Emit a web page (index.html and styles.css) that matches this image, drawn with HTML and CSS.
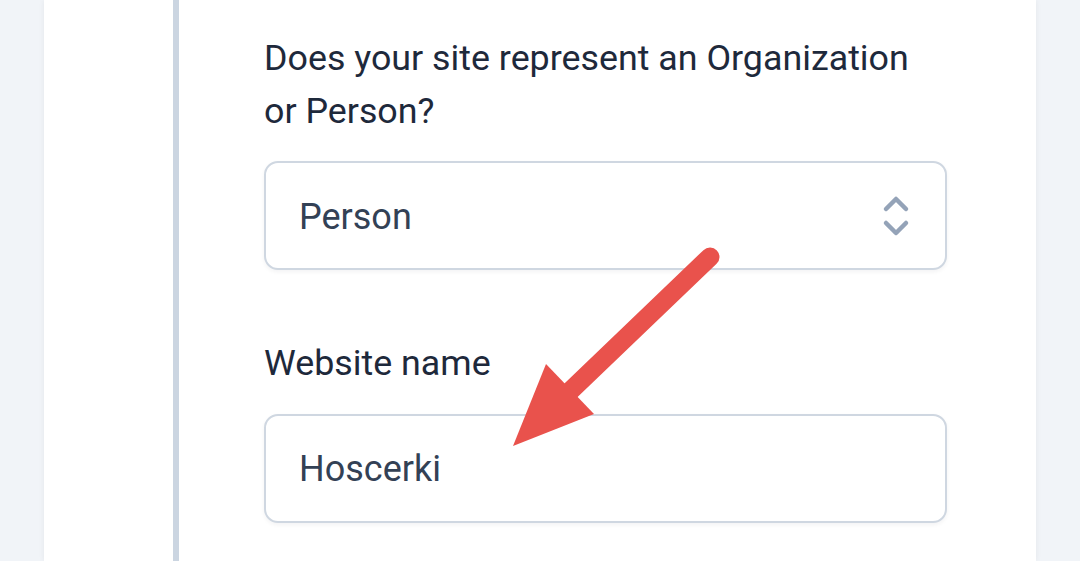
FILE: index.html
```html
<!DOCTYPE html>
<html lang="en">
<head>
<meta charset="utf-8">
<title>Site settings</title>
<link rel="stylesheet" href="styles.css">
</head>
<body>
<div class="page">
  <div class="card">
    <div class="section">
      <div class="field">
        <label class="label" for="kind">Does your site represent an Organization or Person?</label>
        <div class="control select">
          <span class="value">Person</span>
          <svg class="chev" width="30" height="46" viewBox="0 0 30 46" aria-hidden="true">
            <path d="M5 16 L15 6 L25 16" fill="none" stroke="#94a3b8" stroke-width="4.5" stroke-linecap="round" stroke-linejoin="round"/>
            <path d="M5 30 L15 40 L25 30" fill="none" stroke="#94a3b8" stroke-width="4.5" stroke-linecap="round" stroke-linejoin="round"/>
          </svg>
        </div>
      </div>
      <div class="field">
        <label class="label" for="name">Website name</label>
        <div class="control input"><span class="value">Hoscerki</span></div>
      </div>
    </div>
  </div>
  <svg class="arrow" width="1080" height="561" viewBox="0 0 1080 561" aria-hidden="true">
    <line x1="710" y1="257" x2="565" y2="396" stroke="#e9524c" stroke-width="19" stroke-linecap="round"/>
    <polygon points="513,446 546,364 594,414" fill="#e9524c"/>
  </svg>
</div>
</body>
</html>
```
FILE: styles.css
```css
html, body {
  margin: 0;
  padding: 0;
}
body {
  background: #f1f4f8;
  font-family: Roboto, "Liberation Sans", sans-serif;
  overflow: hidden;
}
.page {
  position: relative;
  width: 1080px;
  height: 561px;
  overflow: hidden;
}
.card {
  margin-left: 44px;
  width: 992px;
  height: 561px;
  background: #ffffff;
  box-shadow: 0 0 6px rgba(15, 23, 42, 0.06);
  padding-left: 129px;
  box-sizing: border-box;
}
.section {
  border-left: 6px solid #cbd5e1;
  height: 100%;
  box-sizing: border-box;
  padding: 32px 89px 0 85px;
  display: flex;
  flex-direction: column;
  gap: 67px;
}
.field {
  display: flex;
  flex-direction: column;
  gap: 24px;
}
.label {
  font-size: 35.8px;
  line-height: 52.5px;
  color: #1e293b;
  padding-right: 8px;
}
.control {
  height: 109px;
  flex: none;
  box-sizing: border-box;
  border: 2px solid #cfd7e1;
  border-radius: 14px;
  background: #fff;
  box-shadow: 0 2px 4px rgba(15, 23, 42, 0.05);
  display: flex;
  align-items: center;
  justify-content: space-between;
  padding: 2px 34px 0 33px;
}
.value {
  font-size: 36px;
  color: #334155;
}
.chev {
  display: block;
  margin-top: -2px;
}
.arrow {
  position: absolute;
  left: 0;
  top: 0;
  pointer-events: none;
}
```
